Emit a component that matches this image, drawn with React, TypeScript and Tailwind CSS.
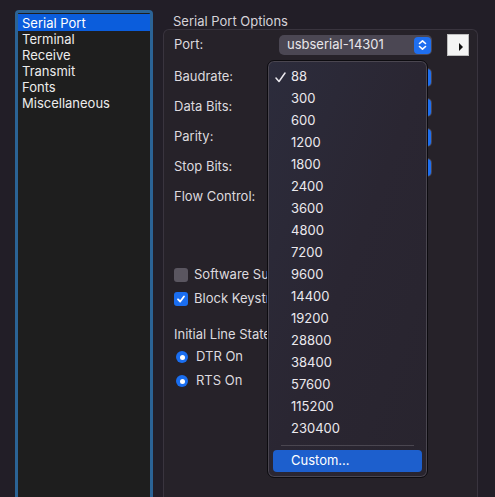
import React from "react";

const rates = ["88","300","600","1200","1800","2400","3600","4800","7200","9600","14400","19200","28800","38400","57600","115200","230400"];

function Stepper() {
  return (
    <div className="w-[17px] h-[17px] rounded-[4px] bg-[#1f6ff0] flex items-center justify-center">
      <svg width="9" height="12" viewBox="0 0 9 12" fill="none" stroke="white" strokeWidth="1.6" strokeLinecap="round" strokeLinejoin="round">
        <path d="M1.5 4.5 L4.5 1.8 L7.5 4.5" />
        <path d="M1.5 7.5 L4.5 10.2 L7.5 7.5" />
      </svg>
    </div>
  );
}

function Row({ label, h, children }: { label: string; h: string; children?: React.ReactNode }) {
  return (
    <div className={`flex items-center ${h}`}>
      <div className="w-[105px] shrink-0">{label}</div>
      {children}
    </div>
  );
}

function HiddenPopup() {
  return (
    <div className="w-[153px] h-[19px] rounded-[5px] bg-[#4a4651] flex items-center justify-end pr-[1px]">
      <Stepper />
    </div>
  );
}

function Radio({ label, h }: { label: string; h: string }) {
  return (
    <div className={`flex items-center gap-[8px] ${h} pl-[2px]`}>
      <div className="w-[12px] h-[12px] rounded-full bg-[#1a6ef0] flex items-center justify-center">
        <div className="w-[5px] h-[5px] rounded-full bg-white" />
      </div>
      <span>{label}</span>
    </div>
  );
}

export default function App() {
  return (
    <div
      className="w-[495px] h-[497px] overflow-hidden bg-[#221e27] text-[13px] text-[#e2e0e4] flex relative"
      style={{ fontFamily: "Inter, 'Noto Sans', sans-serif" }}
    >
      {/* left list */}
      <div className="pl-[15px] pt-[10px] w-[163px] shrink-0">
        <div className="w-[138px] h-[500px] rounded-t-[4px] border-[3px] border-b-0 border-[#2b6395] bg-[#1e1e1e] pt-[1px] leading-[16px] text-[#ececec]">
          <div className="bg-[#0b5ddc] h-[17px] pl-[4px] text-white flex items-center">Serial Port</div>
          <div className="pl-[4px] h-[16px]">Terminal</div>
          <div className="pl-[4px] h-[16px]">Receive</div>
          <div className="pl-[4px] h-[16px]">Transmit</div>
          <div className="pl-[4px] h-[16px]">Fonts</div>
          <div className="pl-[4px] h-[16px]">Miscellaneous</div>
        </div>
      </div>

      {/* right */}
      <div className="flex flex-col w-[315px] shrink-0">
        <div className="pl-[10px] h-[29px] pt-[13px] leading-[16px] text-[#d6d3d9]">Serial Port Options</div>
        <div className="flex-1 rounded-t-[6px] border border-b-0 border-[#39343e] bg-[#262229] pl-[10px] pt-[4px] text-[#dddadf]">
          <Row label="Port:" h="h-[22px]">
            <div className="w-[153px] h-[20px] rounded-[5px] bg-[#4b4753] flex items-center justify-between pl-[8px] pr-[1px] text-[#e8e6ea]">
              <span>usbserial-14301</span>
              <Stepper />
            </div>
            <div className="ml-[15px] w-[22px] h-[22px] bg-[#f4f4f4] border border-[#bdbdbd] flex items-center justify-center">
              <svg width="6" height="8" viewBox="0 0 6 8" className="ml-[6px] mt-[4px]"><path d="M1 0 L5 4 L1 8 Z" fill="#111" /></svg>
            </div>
          </Row>
          <div className="h-[6px]" />
          <Row label="Baudrate:" h="h-[30px]"><HiddenPopup /></Row>
          <Row label="Data Bits:" h="h-[30px]"><HiddenPopup /></Row>
          <Row label="Parity:" h="h-[30px]"><HiddenPopup /></Row>
          <Row label="Stop Bits:" h="h-[30px]"><HiddenPopup /></Row>
          <Row label="Flow Control:" h="h-[30px]" />
          <div className="h-[51px]" />
          <div className="flex items-center gap-[6px] h-[24px]">
            <div className="w-[14px] h-[14px] rounded-[3px] bg-[#5a5660] shrink-0" />
            <span className="w-[73px] overflow-hidden whitespace-nowrap">Software Supplied Flow Control</span>
          </div>
          <div className="flex items-center gap-[6px] h-[24px]">
            <div className="w-[14px] h-[14px] rounded-[3px] bg-[#1a6ef0] flex items-center justify-center shrink-0">
              <svg width="10" height="10" viewBox="0 0 10 10" fill="none" stroke="white" strokeWidth="1.8" strokeLinecap="round" strokeLinejoin="round"><path d="M2 5.3 L4.2 7.5 L8 2.5" /></svg>
            </div>
            <span className="w-[73px] overflow-hidden whitespace-nowrap">Block Keystrokes while Disconnected</span>
          </div>
          <div className="h-[13px]" />
          <div className="h-[22px] flex items-center w-[94px] overflow-hidden whitespace-nowrap">Initial Line State:</div>
          <Radio label="DTR On" h="h-[22px]" />
          <Radio label="RTS On" h="h-[26px]" />
        </div>
      </div>

      {/* popup menu */}
      <div className="absolute left-[267px] top-[60px] w-[161px] h-[418px] rounded-[7px] border border-[#0d0c10] bg-gradient-to-br from-[#2c2c3c] via-[#2a2632] to-[#28242e] shadow-[inset_0_0_0_1px_#4a4650] px-[5px] pt-[5px] text-[#ebe9ee]">
        {rates.map((r, i) => (
          <div key={r} className="h-[22px] flex items-center relative pl-[18px]">
            {i === 0 && (
              <svg className="absolute left-[2px] top-[6px]" width="11" height="11" viewBox="0 0 11 11" fill="none" stroke="#ebe9ee" strokeWidth="1.5" strokeLinecap="round" strokeLinejoin="round">
                <path d="M1 6 L4 9.5 L10 1" />
              </svg>
            )}
            {r}
          </div>
        ))}
        <div className="h-[10px] flex items-center px-[8px]"><div className="h-px w-full bg-[#4a4650]" /></div>
        <div className="h-[22px] rounded-[4px] bg-[#1d5fcd] pl-[18px] flex items-center text-white">Custom...</div>
      </div>
    </div>
  );
}
